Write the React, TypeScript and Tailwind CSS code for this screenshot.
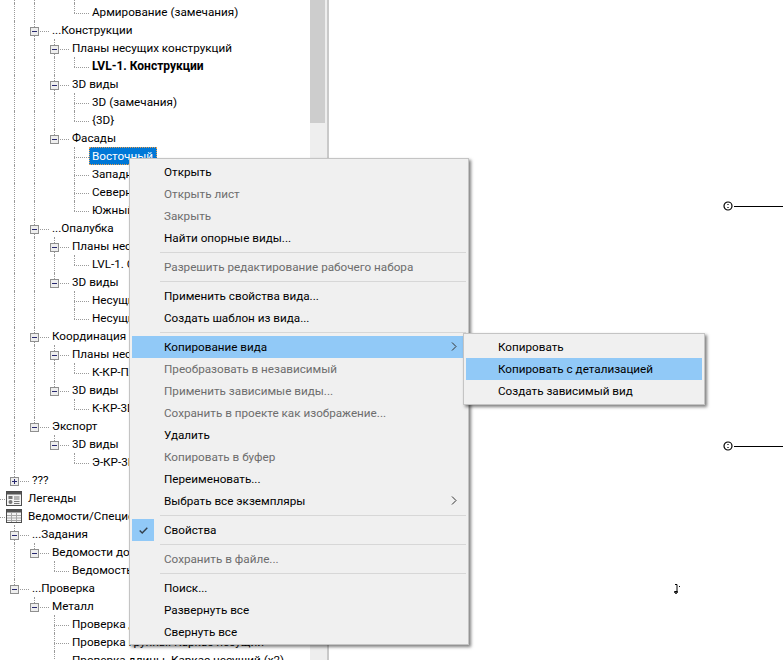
import React from "react";

type N = { label?: string; hidden?: boolean; bold?: boolean; selected?: boolean; icon?: "legend" | "table"; plus?: boolean; children?: N[] };

const leaf = (label: string, extra: Partial<N> = {}): N => ({ label, ...extra });
const group = (label: string, children: N[]): N => ({ label, children });

const tree: N[] = [
  {
    hidden: true,
    children: [
      {
        hidden: true,
        children: [
          {
            hidden: true,
            children: [
              { hidden: true, children: [leaf("Армирование"), leaf("Армирование (замечания)")] },
            ],
          },
          group("...Конструкции", [
            group("Планы несущих конструкций", [leaf("LVL-1. Конструкции", { bold: true })]),
            group("3D виды", [leaf("3D (замечания)"), leaf("{3D}")]),
            group("Фасады", [leaf("Восточный", { selected: true }), leaf("Западный"), leaf("Северный"), leaf("Южный")]),
          ]),
          group("...Опалубка", [
            group("Планы несущих конструкций", [leaf("LVL-1. Опалубка")]),
            group("3D виды", [leaf("Несущие конструкции"), leaf("Несущие стены")]),
          ]),
          group("Координация", [
            group("Планы несущих", [leaf("К-КР-План")]),
            group("3D виды", [leaf("К-КР-3D")]),
          ]),
          group("Экспорт", [group("3D виды", [leaf("Э-КР-3D")])]),
        ],
      },
      { label: "???", plus: true },
    ],
  },
  leaf("Легенды", { icon: "legend" }),
  {
    label: "Ведомости/Спецификации",
    icon: "table",
    children: [
      group("...Задания", [group("Ведомости доработок", [leaf("Ведомость листов")])]),
      group("...Проверка", [
        group("Металл", [
          leaf("Проверка длины. Балки"),
          leaf("Проверка группы. Каркас несущий"),
          leaf("Проверка длины. Каркас несущий (х2)"),
        ]),
      ]),
    ],
  },
];

function Expander({ plus }: { plus?: boolean }) {
  return (
    <span className="absolute left-[6px] top-[6px] z-10 flex h-[9px] w-[9px] items-center justify-center border border-[#8f8f8f] bg-[#eeeeee]">
      <span className="block h-px w-[5px] bg-[#28286e]" />
      {plus && <span className="absolute h-[5px] w-px bg-[#28286e]" />}
    </span>
  );
}

function LegendIcon() {
  return (
    <svg width="16" height="15" viewBox="0 0 16 15" className="shrink-0">
      <rect x="0.5" y="0.5" width="15" height="14" fill="#f4f4f4" stroke="#4d4d4d" />
      <rect x="1" y="1" width="14" height="2.5" fill="#555" />
      <rect x="2.5" y="5" width="4" height="3" fill="#777" />
      <circle cx="4.5" cy="11" r="2" fill="#777" />
      <path d="M8 6h5.5M8 8h5.5M8 10.5h5.5M8 12.5h5.5" stroke="#777" strokeWidth="1" />
    </svg>
  );
}

function TableIcon() {
  return (
    <svg width="16" height="14" viewBox="0 0 16 14" className="shrink-0">
      <rect x="0.5" y="0.5" width="15" height="13" fill="#f4f4f4" stroke="#4d4d4d" />
      <rect x="1" y="1" width="14" height="2.5" fill="#555" />
      <path d="M1 6.5h14M1 9h14M1 11.5h14M5.5 4v9M10.5 4v9" stroke="#a8a8a8" strokeWidth="1" />
    </svg>
  );
}

function Row({ node, c, flags, hasNext }: { node: N; c: number; flags: boolean[]; hasNext: boolean }) {
  const cols = [];
  for (let i = -1; i < c; i++) {
    cols.push(
      <span key={i} className="relative block h-[18px] w-[20px] shrink-0">
        {flags[i + 1] && <span className="absolute left-[10px] top-0 h-[18px] border-l border-dotted border-[#9a9a9a]" />}
      </span>
    );
  }
  const expandable = !!node.children || node.plus;
  return (
    <div className="flex h-[18px] items-center whitespace-nowrap">
      {cols}
      <span className="relative block h-[18px] w-[20px] shrink-0">
        <span className={hasNext ? "absolute left-[10px] top-0 h-[18px] border-l border-dotted border-[#9a9a9a]" : "absolute left-[10px] top-0 h-[10px] border-l border-dotted border-[#9a9a9a]"} />
        <span className="absolute left-[10px] top-[10px] w-[15px] border-t border-dotted border-[#9a9a9a]" />
        {expandable && !node.icon && <Expander plus={node.plus} />}
      </span>
      {node.icon ? (
        <span className="relative ml-[2px] flex items-center gap-[6px] bg-white">
          {node.icon === "legend" ? <LegendIcon /> : <TableIcon />}
          <span>{node.label}</span>
        </span>
      ) : (
        <span
          className={
            node.selected
              ? "relative ml-[5px] flex h-[18px] w-[68px] items-center border border-dotted border-[#e8a050] bg-[#0078d7] px-[2px] text-white"
              : node.bold
                ? "relative ml-[5px] px-[3px] text-[12px] font-bold"
                : "relative ml-[5px] px-[3px]"
          }
        >
          {node.label}
        </span>
      )}
    </div>
  );
}

function Nodes({ list, c, flags }: { list: N[]; c: number; flags: boolean[] }) {
  return (
    <>
      {list.map((n, i) => {
        const hasNext = i < list.length - 1;
        const next = [...flags, hasNext];
        return (
          <React.Fragment key={i}>
            {!n.hidden && <Row node={n} c={c} flags={flags} hasNext={hasNext} />}
            {n.children && <Nodes list={n.children} c={c + 1} flags={next} />}
          </React.Fragment>
        );
      })}
    </>
  );
}

type Item = { t?: string; off?: boolean; sub?: boolean; hi?: boolean; check?: boolean; sep?: boolean };

const menu: Item[] = [
  { t: "Открыть" },
  { t: "Открыть лист", off: true },
  { t: "Закрыть", off: true },
  { t: "Найти опорные виды..." },
  { sep: true },
  { t: "Разрешить редактирование рабочего набора", off: true },
  { sep: true },
  { t: "Применить свойства вида..." },
  { t: "Создать шаблон из вида..." },
  { sep: true },
  { t: "Копирование вида", sub: true, hi: true },
  { t: "Преобразовать в независимый", off: true },
  { t: "Применить зависимые виды...", off: true },
  { t: "Сохранить в проекте как изображение...", off: true },
  { t: "Удалить" },
  { t: "Копировать в буфер", off: true },
  { t: "Переименовать..." },
  { t: "Выбрать все экземпляры", sub: true },
  { sep: true },
  { t: "Свойства", check: true },
  { sep: true },
  { t: "Сохранить в файле...", off: true },
  { sep: true },
  { t: "Поиск..." },
  { t: "Развернуть все" },
  { t: "Свернуть все" },
];

function Chevron() {
  return (
    <svg width="6" height="9" viewBox="0 0 6 9" className="absolute right-[9px] top-[6px]">
      <path d="M1 0.5L5 4.5L1 8.5" fill="none" stroke="#333" strokeWidth="1" />
    </svg>
  );
}

function MenuRow({ item }: { item: Item }) {
  if (item.sep) {
    return (
      <div className="flex h-[7px] items-center pl-[28px]">
        <div className="h-px w-full bg-[#d7d7d7]" />
      </div>
    );
  }
  return (
    <div className={item.hi ? "relative flex h-[22px] items-center bg-[#91c9f7]" : "relative flex h-[22px] items-center"}>
      {item.check && (
        <span className="absolute left-0 top-0 flex h-[22px] w-[22px] items-center justify-center bg-[#91c9f7]">
          <svg width="9" height="7" viewBox="0 0 9 7">
            <path d="M0.7 3.5L3.2 6L8.3 0.7" fill="none" stroke="#33404c" strokeWidth="1.4" />
          </svg>
        </span>
      )}
      <span className={item.off ? "pl-[32px] text-[#6d6d6d]" : "pl-[32px] text-black"}>{item.t}</span>
      {item.sub && <Chevron />}
    </div>
  );
}

function Marker() {
  return (
    <div className="flex items-center">
      <svg width="12" height="12" viewBox="0 0 12 12" className="shrink-0">
        <circle cx="6" cy="6" r="4" fill="white" stroke="black" strokeWidth="1.2" />
        <path d="M6 4v1M6 7v1" stroke="black" strokeWidth="1.2" />
      </svg>
      <div className="h-px flex-1 bg-black" />
    </div>
  );
}

export default function App() {
  return (
    <div className="relative flex h-[660px] w-[783px] overflow-hidden bg-white font-['Roboto',sans-serif] text-[11.7px] leading-[18px] text-black">
      <div className="flex h-full w-[329px] shrink-0 border-r-2 border-[#c9c9c9]">
        <div className="h-full w-[310px] shrink-0 overflow-hidden">
          <div className="-mt-[15px] -ml-[16px]">
            <Nodes list={tree} c={-1} flags={[]} />
          </div>
        </div>
        <div className="h-full w-[17px] bg-[#eeeeee]">
          <div className="h-[123px] w-[15px] bg-[#cdcdcd]" />
        </div>
      </div>

      <div className="relative flex-1">
        <div className="absolute left-[393px] top-[200px] w-[61px]"><Marker /></div>
        <div className="absolute left-[393px] top-[440px] w-[61px]"><Marker /></div>
        <svg width="8" height="12" viewBox="0 0 8 12" className="absolute left-[344px] top-[583px]">
          <path d="M2 1.5h2v7M1.5 8.5h3v1h-1v1h-1v-1h-1z" fill="none" stroke="black" strokeWidth="1" />
          <rect x="6" y="3" width="1" height="1" fill="black" />
        </svg>
      </div>

      <div className="absolute left-[129px] top-[158px] z-20 h-[487px] w-[340px] border border-[#c4c4c4] bg-[#f0f0f0] p-[2px] shadow-[2px_2px_3px_rgba(0,0,0,0.5)]">
        {menu.map((m, i) => (
          <MenuRow key={i} item={m} />
        ))}
      </div>

      <div className="absolute left-[463px] top-[333px] z-30 h-[72px] w-[242px] border border-[#c4c4c4] bg-[#f0f0f0] p-[2px] shadow-[2px_2px_3px_rgba(0,0,0,0.5)]">
        <MenuRow item={{ t: "Копировать" }} />
        <MenuRow item={{ t: "Копировать с детализацией", hi: true }} />
        <MenuRow item={{ t: "Создать зависимый вид" }} />
      </div>
    </div>
  );
}
